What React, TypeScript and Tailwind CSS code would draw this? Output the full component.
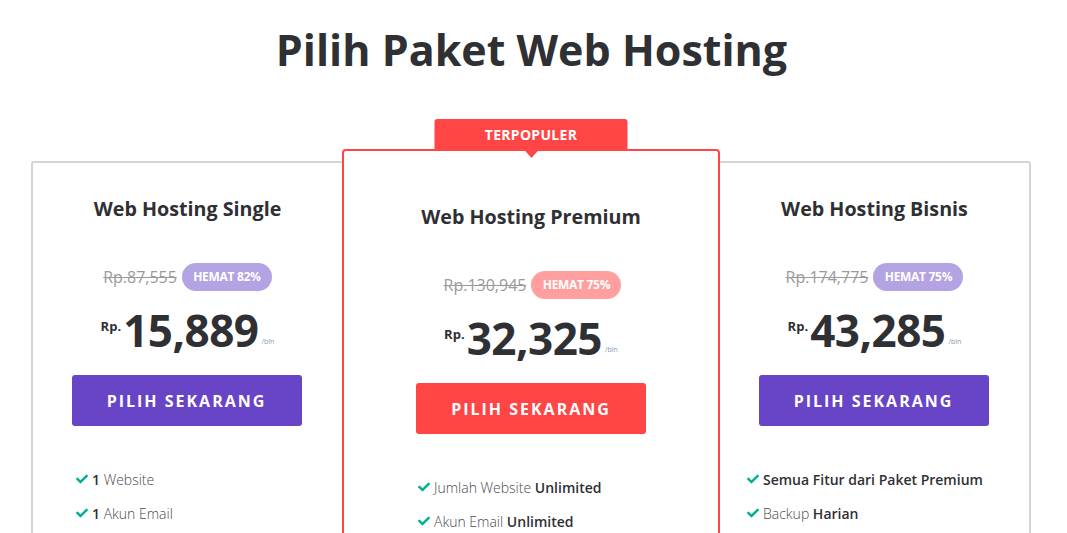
import React from "react";

type Feature = { pre?: string; bold?: string; post?: string };

type Plan = {
  name: string;
  oldPrice: string;
  save: string;
  price: string;
  features: Feature[];
  popular?: boolean;
};

const plans: Plan[] = [
  {
    name: "Web Hosting Single",
    oldPrice: "Rp.87,555",
    save: "HEMAT 82%",
    price: "15,889",
    features: [
      { bold: "1", post: " Website" },
      { bold: "1", post: " Akun Email" },
    ],
  },
  {
    name: "Web Hosting Premium",
    oldPrice: "Rp.130,945",
    save: "HEMAT 75%",
    price: "32,325",
    popular: true,
    features: [
      { pre: "Jumlah Website ", bold: "Unlimited" },
      { pre: "Akun Email ", bold: "Unlimited" },
    ],
  },
  {
    name: "Web Hosting Bisnis",
    oldPrice: "Rp.174,775",
    save: "HEMAT 75%",
    price: "43,285",
    features: [
      { bold: "Semua Fitur dari Paket Premium" },
      { pre: "Backup ", bold: "Harian" },
    ],
  },
];

function CheckIcon() {
  return (
    <svg viewBox="0 0 512 512" className="w-[12px] h-[12px] shrink-0 fill-[#00b090]">
      <path d="M173.9 439.4l-166.4-166.4c-10-10-10-26.2 0-36.2l36.2-36.2c10-10 26.2-10 36.2 0L192 312.7 432.1 72.6c10-10 26.2-10 36.2 0l36.2 36.2c10 10 10 26.2 0 36.2l-294.4 294.4c-10 10-26.2 10-36.2 0z" />
    </svg>
  );
}

function PlanCard({ plan, listPad }: { plan: Plan; listPad: string }) {
  const popular = plan.popular;
  return (
    <div
      className={
        popular
          ? "relative z-10 -ml-[2px] w-[378px] h-[520px] bg-white border-2 border-[#ff4545] rounded-[4px] pt-[53px]"
          : "mt-[12px] w-[313px] h-[500px] bg-white border-2 border-[#d4d4d4] rounded-[3px] pt-[33px] first:ml-0 -ml-[2px]"
      }
    >
      {popular && (
        <div className="absolute -top-[32px] left-1/2 -translate-x-1/2 w-[193px] h-[30px] bg-[#ff4545] rounded-t-[3px] flex items-center justify-center">
          <span className="text-white text-[14px] font-bold tracking-[0.3px]">TERPOPULER</span>
          <div className="absolute left-1/2 -translate-x-1/2 top-[30px] w-0 h-0 border-l-[8px] border-r-[8px] border-t-[9px] border-l-transparent border-r-transparent border-t-[#ff4545]" />
        </div>
      )}
      <h2 className="text-center font-bold text-[#2f3033] leading-[26px] text-[19.7px]">
        {plan.name}
      </h2>
      <div className={"mt-[41px] flex items-center justify-center gap-[5px] " + (popular ? "pl-[3px]" : "")}>
        <span className="text-[16px] text-[#9a9a9a] line-through">{plan.oldPrice}</span>
        <span
          className={
            "h-[28px] w-[90px] rounded-full flex items-center justify-center text-white text-[12px] font-bold tracking-[-0.3px] " +
            (popular ? "bg-[#ff9f9f]" : "bg-[#b4a3e3]")
          }
        >
          {plan.save}
        </span>
      </div>
      <div className="mt-[17px] h-[45px] text-center leading-none text-[#2f3033]">
        <span className="text-[13px] font-bold align-[16px]">Rp.</span>
        <span className="text-[44px] font-bold ml-[2px] tracking-[-0.5px]">{plan.price}</span>
        <span className="text-[7px] text-[#8a9bb0] ml-[3px] align-[3px]">/bln</span>
      </div>
      <div className="mt-[22px] flex justify-center">
        <button
          className={
            "w-[230px] h-[51px] rounded-[3px] text-white text-[16px] font-bold tracking-[2px] " +
            (popular ? "bg-[#ff4545]" : "bg-[#6844c6] -ml-[2px]")
          }
        >
          PILIH SEKARANG
        </button>
      </div>
      <ul className={"mt-[43px] flex flex-col gap-[14px] " + listPad}>
        {plan.features.map((f, i) => (
          <li key={i} className="flex items-center gap-[4px] h-[20px] text-[14px] text-[#4a4a4f]">
            <CheckIcon />
            <span className="font-light">
              {f.pre}
              {f.bold && <span className="font-semibold text-[#2f3033]">{f.bold}</span>}
              {f.post}
            </span>
          </li>
        ))}
      </ul>
    </div>
  );
}

export default function App() {
  return (
    <div className="h-screen bg-white font-['Open_Sans',sans-serif] overflow-hidden">
      <h1 className="pt-[28px] pr-[4px] text-center text-[43px] font-bold leading-none text-[#2f3033]">
        Pilih Paket Web Hosting
      </h1>
      <div className="mt-[78px] ml-[31px] flex items-start">
        <PlanCard plan={plans[0]} listPad="pl-[43px]" />
        <PlanCard plan={plans[1]} listPad="pl-[74px]" />
        <PlanCard plan={plans[2]} listPad="pl-[27px]" />
      </div>
    </div>
  );
}
